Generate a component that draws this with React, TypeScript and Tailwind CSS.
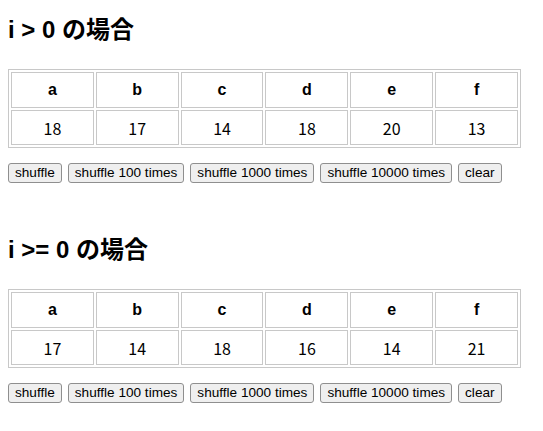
import React from 'react'

const headers = ['a', 'b', 'c', 'd', 'e', 'f']

const sections = [
    { title: 'i > 0 の場合', counts: [18, 17, 14, 18, 20, 13] },
    { title: 'i >= 0 の場合', counts: [17, 14, 18, 16, 14, 21] },
]

const buttons = ['shuffle', 'shuffle 100 times', 'shuffle 1000 times', 'shuffle 10000 times', 'clear']

function CountTable({ counts }: { counts: number[] }) {
    return (
        <table className="w-[513px] table-fixed border-separate border-spacing-[2px] border border-[#c8c8c8]">
            <tbody>
                <tr>
                    {headers.map((h) => (
                        <th key={h} className="h-[36px] border border-[#c8c8c8] text-center text-[16px] font-bold p-0 font-['Liberation_Sans',sans-serif]">
                            {h}
                        </th>
                    ))}
                </tr>
                <tr>
                    {counts.map((c, i) => (
                        <td key={i} className="h-[35px] border border-[#c8c8c8] text-center text-[16px] p-0">
                            {c}
                        </td>
                    ))}
                </tr>
            </tbody>
        </table>
    )
}

export default function App() {
    return (
        <div className="flex flex-col gap-[53px] px-[8px] pt-[16px] text-black bg-white" style={{ fontFamily: '"Noto Sans CJK JP", "Liberation Sans", sans-serif' }}>
            {sections.map((s) => (
                <div key={s.title}>
                    <h2 className="text-[24px] leading-[28px] font-bold" style={{ fontFamily: '"Liberation Sans", "Noto Sans CJK JP", sans-serif' }}>
                        {s.title}
                    </h2>
                    <div className="mt-[25px]">
                        <CountTable counts={s.counts} />
                    </div>
                    <div className="mt-[15px] flex gap-[6px]" style={{ fontFamily: '"Liberation Sans", Arial, sans-serif' }}>
                        {buttons.map((b) => (
                            <button key={b} className="h-[20px] px-[6px] text-[13.6px] leading-none bg-[#efefef] border border-[#8f8f8f] rounded-[3px]">
                                {b}
                            </button>
                        ))}
                    </div>
                </div>
            ))}
        </div>
    )
}
